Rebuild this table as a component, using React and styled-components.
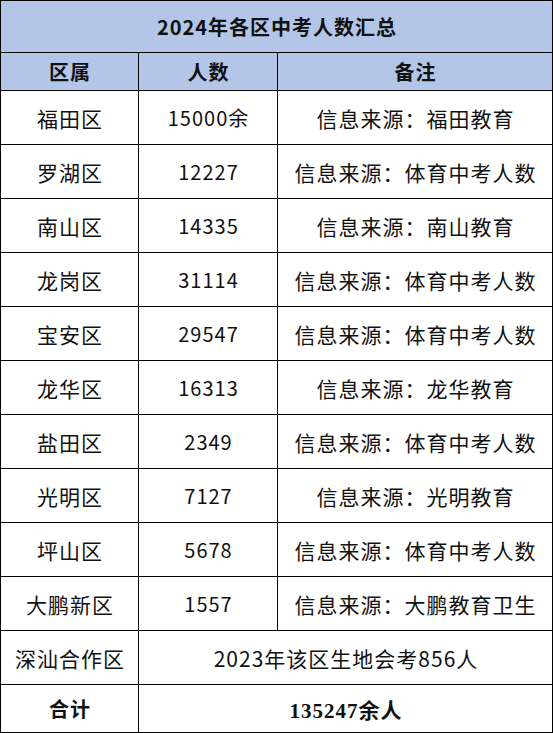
import React from 'react';
import styled, { createGlobalStyle } from 'styled-components';

const GlobalStyle = createGlobalStyle`
  html, body {
    margin: 0;
    padding: 0;
    background: #ffffff;
  }
  body {
    font-family: "Noto Sans CJK SC", "Noto Sans", sans-serif;
  }
`;

const rows = [
  { area: '福田区', count: '15000余', note: '信息来源：福田教育' },
  { area: '罗湖区', count: '12227', note: '信息来源：体育中考人数' },
  { area: '南山区', count: '14335', note: '信息来源：南山教育' },
  { area: '龙岗区', count: '31114', note: '信息来源：体育中考人数' },
  { area: '宝安区', count: '29547', note: '信息来源：体育中考人数' },
  { area: '龙华区', count: '16313', note: '信息来源：龙华教育' },
  { area: '盐田区', count: '2349', note: '信息来源：体育中考人数' },
  { area: '光明区', count: '7127', note: '信息来源：光明教育' },
  { area: '坪山区', count: '5678', note: '信息来源：体育中考人数' },
  { area: '大鹏新区', count: '1557', note: '信息来源：大鹏教育卫生' },
];

const App = () => {
  return (
    <>
      <GlobalStyle />
      <Table>
        <Cell span={3} head size={20} height={51}>2024年各区中考人数汇总</Cell>
        <Cell head size={20} height={37}>区属</Cell>
        <Cell head size={20} height={37}>人数</Cell>
        <Cell head size={20} height={37}>备注</Cell>
        {rows.map((row) => (
          <React.Fragment key={row.area}>
            <Cell>{row.area}</Cell>
            <Cell size={20}>{row.count}</Cell>
            <Cell>{row.note}</Cell>
          </React.Fragment>
        ))}
        <Cell>深汕合作区</Cell>
        <Cell span={2}>2023年该区生地会考856人</Cell>
        <Cell bold size={20} height={47}>合计</Cell>
        <Cell span={2} serif height={47}>135247余人</Cell>
      </Table>
    </>
  );
};

const Table = styled.div`
  display: grid;
  grid-template-columns: 137px 138px 274px;
  gap: 1px;
  width: 551px;
  border: 1px solid #000;
  background-color: #000;
`;

const Cell = styled.div`
  grid-column: span ${(p) => p.span || 1};
  height: ${(p) => p.height || 53}px;
  display: flex;
  align-items: center;
  justify-content: center;
  background-color: ${(p) => (p.head ? '#b4c6e7' : '#ffffff')};
  color: #111;
  font-family: ${(p) =>
    p.serif
      ? '"Liberation Serif", "Noto Sans CJK SC", serif'
      : '"Noto Sans CJK SC", "Noto Sans", sans-serif'};
  font-size: ${(p) => p.size || 21}px;
  font-weight: ${(p) => (p.head || p.bold || p.serif ? 700 : 400)};
  letter-spacing: 1px;
  white-space: nowrap;
  padding-left: 1px;
`;

export default App;
